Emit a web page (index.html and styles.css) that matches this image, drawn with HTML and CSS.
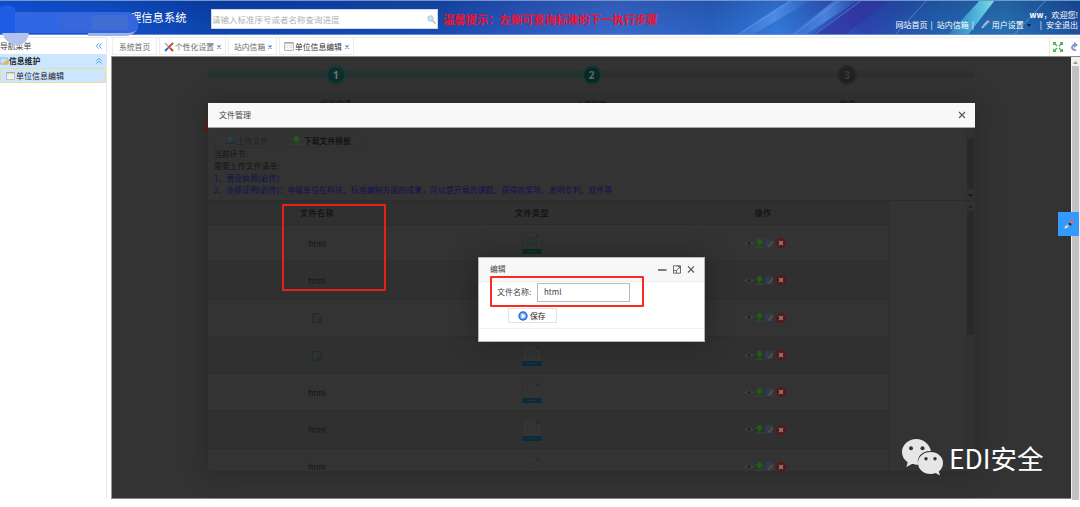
FILE: index.html
```html
<!DOCTYPE html>
<html lang="zh-CN">
<head>
<meta charset="utf-8">
<title>信息系统</title>
<link rel="stylesheet" href="styles.css">
</head>
<body>
<svg class="defs" width="0" height="0">
  <symbol id="eye" viewBox="0 0 16 16"><path d="M0 8Q8 1 16 8Q8 15 0 8Z" fill="#454444" stroke="#4b4039"/><circle cx="8" cy="8" r="4" fill="#25364c"/><circle cx="8" cy="8" r="1.800" fill="#121c28"/></symbol>
  <symbol id="down" viewBox="0 0 16 16"><path d="M5 0h6v4H15L8 12 1 4h4Z" fill="#1d6011"/><path d="M1 14.500h14" fill="none" stroke="#294d29" stroke-width="2.400"/></symbol>
  <symbol id="up" viewBox="0 0 16 16"><path d="M5 10h6V6H14L8 0 2 6h3Z" fill="#1d455d"/><path d="M1 11v3h14v-3" fill="none" stroke="#22292e" stroke-width="2.400"/></symbol>
  <symbol id="edit" viewBox="0 0 16 16"><rect x="1" y="1" width="13" height="13" fill="#2d3d50" stroke="#28415b"/><path d="M5 15l1-4 7-7 2 2-7 7Z" fill="#635028"/></symbol>
  <symbol id="del" viewBox="0 0 16 16"><circle cx="8" cy="8" r="7.800" fill="#5e1414"/><path d="M5 5l6 6M11 5l-6 6" stroke="#858080" stroke-width="2.400"/></symbol>
  <symbol id="broken" viewBox="0 0 16 16"><path d="M1 1h10l4 4v3l-4 2-5 5H1Z" fill="#303336" stroke="#242424"/><path d="M2 13l4-5 4 3-3 3H2Z" fill="#1c3f1b"/><path d="M15 10v5H9Z" fill="#2d2f2d" stroke="#232323"/></symbol>
  <symbol id="html" viewBox="0 0 20 22"><path d="M1 17V2q0-1 1-1h12l5 5v11" fill="#343434" stroke="#303030" stroke-width=".6"/><path d="M14 1v4h5" fill="#2c2c2c"/><path d="M7 7L4.500 9.500 7 12M13 7l2.500 2.500L13 12M11 6.500l-2 6" fill="none" stroke="#1f2f38" stroke-width=".8"/><rect x=".5" y="17" width="19" height="5" rx=".5" fill="#0b2b3b"/><path d="M5 19.500h10" stroke="#173747" stroke-width="1.200" stroke-dasharray="2 .5"/></symbol>
  <symbol id="jpg" viewBox="0 0 20 22"><path d="M1 17V2q0-1 1-1h12l5 5v11" fill="#343434" stroke="#303030" stroke-width=".6"/><path d="M14 1v4h5" fill="#2c2c2c"/><path d="M5 6h10v7H5ZM5.500 12l3-2 2 1 2-2 2.500 2" fill="none" stroke="#1a322a" stroke-width=".8"/><circle cx="7.500" cy="8" r=".8" fill="#1a322a"/><rect x=".5" y="17" width="19" height="5" rx=".5" fill="#0d2c22"/><path d="M6.500 19.500h7" stroke="#1a3a2f" stroke-width="1.200" stroke-dasharray="2 .5"/></symbol>
  <symbol id="form" viewBox="0 0 10 9"><rect x=".5" y=".5" width="9" height="8" rx=".5" fill="#f7f7f2" stroke="#b9bbb2"/><path d="M.5 1h9" stroke="#8c9b91"/><path d="M1.500 3.500h2M1.500 5.500h2M5 3.500h3.500M5 5.500h3.500" stroke="#d5d7d5" stroke-width=".7"/></symbol>
  <symbol id="pen" viewBox="0 0 16 16"><path d="M1 15l1-4 9-9 4 3-9 9Z" fill="#7cc5ef"/><path d="M10 1q3-1 5 1v4l-2 1-4-4Z" fill="#e56060"/><path d="M1 15l1-5 4 4Z" fill="#ffe3a0"/><path d="M6 8l3-3 4 3-3 3Z" fill="#17365e"/></symbol>
  <symbol id="crayon" viewBox="0 0 16 16"><path d="M1 15l2-6 8-8 4 3-8 8Z" fill="#4aa7ec"/><path d="M11 0q4 0 5 3l-2 3-4-4Z" fill="#ef7365"/><path d="M1 15l1-5 4 3Z" fill="#f2bd73"/><path d="M5 9l7-7" stroke="#d6effc" stroke-width="1.500"/></symbol>
</svg>

<header class="header">
  <svg class="header-art" viewBox="0 0 1080 35" preserveAspectRatio="none">
    <defs>
      <linearGradient id="bg"><stop offset="0" stop-color="#1155de"/><stop offset=".1" stop-color="#104fca"/><stop offset=".2" stop-color="#0b3fa5"/><stop offset=".41" stop-color="#1848a8"/><stop offset=".48" stop-color="#2d55b8"/><stop offset=".57" stop-color="#3d68c6"/><stop offset=".66" stop-color="#2d60bd"/><stop offset=".72" stop-color="#367dd8"/><stop offset=".8" stop-color="#303fa8"/><stop offset=".86" stop-color="#245ca6"/><stop offset=".93" stop-color="#2a72ac"/><stop offset="1" stop-color="#1c4b94"/></linearGradient>
      <linearGradient id="ray"><stop offset="0" stop-color="#4b8de6" stop-opacity=".1"/><stop offset=".5" stop-color="#5a95ec" stop-opacity=".7"/><stop offset="1" stop-color="#4b8de6" stop-opacity=".05"/></linearGradient>
      <linearGradient id="shade" x2="0" y2="1"><stop offset="0" stop-color="#001f66" stop-opacity=".2"/><stop offset="1" stop-color="#1c68e0" stop-opacity=".14"/></linearGradient>
      <linearGradient id="cyan"><stop offset="0" stop-color="#3b9bd2" stop-opacity=".5"/><stop offset=".65" stop-color="#55b9dc"/><stop offset="1" stop-color="#79e0e0"/></linearGradient>
    </defs>
    <rect width="1080" height="35" fill="url(#bg)"/>
    <rect width="1080" height="35" fill="url(#shade)"/>
    <path d="M735 35L790 0h22L752 35Z" fill="url(#ray)"/>
    <path d="M790 35L835 0h24L805 35Z" fill="url(#ray)"/>
    <path d="M812 35L860 0h29L845 35Z" fill="#3333a0" opacity=".65"/>
    <path d="M738 35L792 0M793 35L840 0M814 35L862 0M895 35L927 0" stroke="#6aa2ef" stroke-width="1" opacity=".6"/>
    <path d="M948 35L980 0h15L968 35Z" fill="url(#cyan)"/>
    <path d="M1014 35L1046 0" stroke="#4a93cf" stroke-width="1"/>
    <path d="M0 .5h1080" stroke="#7197ce"/>
    <path d="M0 34.500h1080" stroke="#6f99dc" stroke-width=".8"/>
  </svg>
  <h1 class="brand">理信息系统</h1>
  <div class="search"><span>请输入标准序号或者名称查询进度</span>
    <svg width="9" height="9" viewBox="0 0 9 9"><path d="M5.500 5.500L8.500 8.500" stroke="#dcae76" stroke-width="1.500"/><circle cx="3.600" cy="3.500" r="2.700" fill="#c9e6f8" stroke="#9fc4df"/></svg>
  </div>
  <strong class="prompt">温馨提示：左侧可查询标准的下一执行步骤</strong>
  <div class="account">
    <p><b>ww</b>，欢迎您!</p>
    <p><span>网站首页</span><i>|</i><span>站内信箱</span><i>|</i><svg class="pen" width="9" height="9"><use href="#crayon"/></svg><span>用户设置</span><em></em><i>|</i><span>安全退出</span></p>
  </div>
</header>

<div class="workspace">
  <aside class="sidebar">
    <div class="side-title"><span>导航菜单</span><svg width="6" height="6" viewBox="0 0 6 6"><path d="M2.700 .3L.5 3l2.200 2.700M5.500 .3L3.300 3l2.200 2.700"/></svg></div>
    <div class="side-group"><svg class="folder" width="9" height="8" viewBox="0 0 9 8"><path d="M0 1h7l1 1v5H0Z" fill="#c9dff3" stroke="#7ba4c6" stroke-width=".7"/><path d="M2 7l5-4 2 1-4 4Z" fill="#f2b43b"/></svg><b>信息维护</b><svg class="fold" width="6" height="6" viewBox="0 0 6 6"><path d="M.3 2.700L3 .5l2.700 2.200M.3 5.500L3 3.300l2.700 2.200"/></svg></div>
    <div class="side-item"><svg width="9" height="8"><use href="#form"/></svg><span>单位信息编辑</span></div>
  </aside>

  <main class="content">
    <nav class="tabs">
      <div class="tab home">系统首页</div>
      <div class="tab custom"><svg width="10" height="10" viewBox="0 0 10 10"><path d="M1 1l8 8" stroke="#9eabb8" stroke-width="1.500"/><path d="M9 1L4 6" stroke="#c44a39" stroke-width="1.800"/><path d="M4 6L1 9" stroke="#376cc3" stroke-width="2"/><path d="M6 6l3 3" stroke="#cc4935" stroke-width="2"/></svg>个性化设置<svg class="x" width="4" height="4" viewBox="0 0 4 4"><path d="M.4 .4l3.200 3.200M3.600 .4L.4 3.600"/></svg></div>
      <div class="tab mail">站内信箱<svg class="x" width="4" height="4" viewBox="0 0 4 4"><path d="M.4 .4l3.200 3.200M3.600 .4L.4 3.600"/></svg></div>
      <div class="tab current"><svg width="10" height="9"><use href="#form"/></svg>单位信息编辑<svg class="x" width="4" height="4" viewBox="0 0 4 4"><path d="M.4 .4l3.200 3.200M3.600 .4L.4 3.600"/></svg></div>
      <div class="tools">
        <svg width="10" height="10" viewBox="0 0 10 10"><path d="M.5 3V.5H3M7 .5h2.500V3M9.500 7v2.500H7M3 9.500H.5V7M1 1l3 3M9 1L6 4M9 9L6 6M1 9l3-3" fill="none" stroke="#58ad58" stroke-width="1.400"/></svg>
        <svg width="9" height="10" viewBox="0 0 9 10"><path d="M5 3H4a2.500 2.500 0 1 0 2 4.500" fill="none" stroke="#8097c8" stroke-width="2"/><path d="M4 0l4 3-4 3Z" fill="#8097c8"/></svg>
      </div>
    </nav>
    <div class="page">
      <div class="stage">
        <div class="steps">
          <div class="step one"><b>1</b><span>填写申请</span></div>
          <div class="step two"><b>2</b><span>上传附件</span></div>
          <div class="step three"><b>3</b><span>完成</span></div>
        </div>
      </div>
      <div class="scroll"><svg width="5" height="3" viewBox="0 0 5 3"><path d="M0 3h5L2.500 0Z" fill="#999"/></svg><i></i></div>
    </div>
  </main>
</div>

<b class="behind">温</b>
<section class="manager">
  <div class="manager-title"><span>文件管理</span><svg width="8" height="8" viewBox="0 0 8 8"><path d="M1 1l6 6M7 1L1 7" stroke="#555a60" stroke-width="1.200"/></svg></div>
  <div class="info">
    <div class="info-text">
      <div class="buttons"><span class="btn upload"><svg width="8" height="9"><use href="#up"/></svg>上传文件</span><span class="btn download"><svg width="9" height="9"><use href="#down"/></svg>下载文件模板</span></div>
      <p>当前环节:</p>
      <p>需要上传文件清单:</p>
      <p class="blue">1、营业执照(必传)</p>
      <p class="blue long">2、业绩证明(必传)：申报单位在科技、标准编制方面的成果，可以是开展的课题、获得的奖项、发明专利、软件等</p>
    </div>
    <div class="inner-scroll"><i></i><svg width="5" height="3" viewBox="0 0 5 3"><path d="M0 0h5L2.500 3Z" fill="#171717"/></svg></div>
  </div>
  <div class="list">
    <div class="table">
      <div class="row head"><span>文件名称</span><span>文件类型</span><span>操作</span></div>
      <div class="row"><span>html</span><svg class="type"><use href="#jpg"/></svg><div class="ops"><svg><use href="#eye"/></svg><svg><use href="#down"/></svg><svg><use href="#edit"/></svg><svg><use href="#del"/></svg></div></div>
      <div class="row alt"><span>html</span><svg class="type"><use href="#jpg"/></svg><div class="ops"><svg><use href="#eye"/></svg><svg><use href="#down"/></svg><svg><use href="#edit"/></svg><svg><use href="#del"/></svg></div></div>
      <div class="row"><span><svg class="missing"><use href="#broken"/></svg></span><svg class="type"><use href="#html"/></svg><div class="ops"><svg><use href="#eye"/></svg><svg><use href="#down"/></svg><svg><use href="#edit"/></svg><svg><use href="#del"/></svg></div></div>
      <div class="row alt"><span><svg class="missing"><use href="#broken"/></svg></span><svg class="type"><use href="#html"/></svg><div class="ops"><svg><use href="#eye"/></svg><svg><use href="#down"/></svg><svg><use href="#edit"/></svg><svg><use href="#del"/></svg></div></div>
      <div class="row"><span>html</span><svg class="type"><use href="#html"/></svg><div class="ops"><svg><use href="#eye"/></svg><svg><use href="#down"/></svg><svg><use href="#edit"/></svg><svg><use href="#del"/></svg></div></div>
      <div class="row alt"><span>html</span><svg class="type"><use href="#html"/></svg><div class="ops"><svg><use href="#eye"/></svg><svg><use href="#down"/></svg><svg><use href="#edit"/></svg><svg><use href="#del"/></svg></div></div>
      <div class="row"><span>html</span><svg class="type"><use href="#html"/></svg><div class="ops"><svg><use href="#eye"/></svg><svg><use href="#down"/></svg><svg><use href="#edit"/></svg><svg><use href="#del"/></svg></div></div>
    </div>
    <div class="list-scroll"><svg width="5" height="3" viewBox="0 0 5 3"><path d="M0 3h5L2.500 0Z" fill="#222"/></svg><i></i></div>
  </div>
</section>

<div class="mark mark-names"></div>

<section class="dialog">
  <div class="dialog-title"><span>编辑</span>
    <svg width="38" height="9" viewBox="0 0 38 9" fill="none" stroke="#5a5f66"><path d="M0 5h8.500" stroke-width="1.600"/><path d="M15.500 .8h7v7.400h-7ZM18.700 5.200l3.400-3.500M19.500 1.400h2.600v2.600M16 5.500h2.500V8" stroke-width=".9"/><path d="M30 1.300l6 6.200M36 1.300l-6 6.200" stroke-width="1.200"/></svg>
  </div>
  <div class="field"><label>文件名称:</label><div class="input">html</div></div>
  <div class="save"><svg width="10" height="10" viewBox="0 0 10 10"><circle cx="5" cy="5" r="4.700" fill="#2e6cdc"/><circle cx="5" cy="5" r="3.200" fill="#72b4f5"/><path d="M3.700 2.300L7.500 5 3.700 7.700Z" fill="#fff"/></svg>保存</div>
</section>
<div class="mark mark-field"></div>

<div class="float-pen"><svg width="10" height="10"><use href="#pen"/></svg></div>

<div class="watermark">
  <svg width="42" height="37" viewBox="0 0 42 37"><path d="M14.500 0C6.500 0 0 5.800 0 13c0 4.300 2.200 8 5.700 10.300L4.300 28l5.600-3c2 .6 4 .8 6.400 .8C14 17 21 11.500 29 12 27.500 5 21.500 0 14.500 0Z" fill="#e6e6e6"/><path d="M28.500 13C21.500 13 16 17.700 16 24s5.500 11 12.500 11c1.800 0 3.700-.3 5.200-.9l4.300 2.300-1.200-3.800C39.500 30.500 41 27.500 41 24c0-6.300-5.500-11-12.500-11Z" fill="#e6e6e6"/><g fill="#333"><circle cx="9" cy="9.300" r="2"/><circle cx="20.500" cy="9.300" r="2"/><circle cx="24" cy="19.700" r="1.700"/><circle cx="33" cy="19.700" r="1.700"/></g></svg>
  <span>EDI安全</span>
</div>

<svg class="redaction" width="142" height="47" viewBox="0 0 142 47">
  <path d="M1 29H29C29 38 26 45 17 45 8 45 3 38 1 29Z" fill="#b2c4ee"/>
  <path d="M28 30H137Q132 36 125 36H88V33H28Z" fill="#9eb4e8"/>
  <path d="M0 7Q7 3 15 8V33H0Z" fill="#1e5ce6"/>
  <path d="M15 12H129Q140 16 138 29Q134 33 128 33H15Z" fill="#3366dc"/>
  <path d="M15 15H60V30H15Z" fill="#2f67e5"/><path d="M60 15H92V30H60Z" fill="#3767db"/><path d="M92 15H128V30H92Z" fill="#406dd3"/>
</svg>
</body>
</html>
```

FILE: styles.css
```css
* { box-sizing: border-box; }
body {
  margin: 0;
  width: 1080px;
  height: 507px;
  position: relative;
  overflow: hidden;
  background: #fff;
  color: #555;
  font: 7.8px/12px "Noto Sans CJK SC", "Noto Sans", sans-serif;
}
p, h1 { margin: 0; }
svg { display: block; flex: none; }
.defs { position: absolute; }

.header { position: relative; display: flex; height: 35px; color: #fff; }
.header > * { position: relative; flex: none; white-space: nowrap; }
.header .header-art { position: absolute; inset: 0; width: 100%; height: 100%; }
.brand { margin-left: 130px; width: 81px; font-size: 11.3px; line-height: 35px; font-weight: 400; }
.search {
  display: flex;
  align-items: center;
  justify-content: space-between;
  width: 227px;
  height: 20px;
  margin-top: 9px;
  padding: 0 1px 0 0;
  background: #fff;
  border: 1px solid #ccd8ee;
  color: #b2b2b2;
  font-size: 8.5px;
}
.prompt { margin-left: 5px; color: #f4102b; font-size: 11.3px; line-height: 39px; }
.account { position: absolute !important; right: 2px; top: 10px; line-height: 10px; font-size: 8px; }
.account p { display: flex; justify-content: flex-end; }
.account i { font-style: normal; margin: 0 4px 0 3px; }
.account em { border: 2.5px solid transparent; border-top: 3px solid #071c34; height: 0; margin: 4px 6px 0 3px; }
.pen { margin: 0 2px 0 3px; }

.workspace { display: flex; height: 464px; padding-top: 2px; }
.sidebar { width: 107px; height: 462px; border: 1px solid #e8e8e8; border-width: 1px 1px 0 0; margin-right: 4px; color: #444; }
.side-title { display: flex; justify-content: space-between; align-items: center; height: 16px; padding-right: 4px; }
.sidebar path { fill: none; stroke: #5ba9e7; }
.sidebar .folder path:first-child { fill: #c9dff3; }
.sidebar .folder path:last-child { fill: #f2b43b; stroke: none; }
.side-group { display: flex; align-items: center; height: 14px; background: #cce6ff; color: #222; }
.side-group .fold { margin-left: auto; margin-right: 4px; }
.side-item { display: flex; align-items: center; height: 15px; padding-left: 5px; background: #cde6ff; border: 1px solid #eadf96; color: #222; gap: 1px; font-size: 8px; }

.content { width: 969px; }
.tabs { display: flex; height: 19px; border-top: 1px solid #ececec; background: #fff; }
.tab { display: flex; align-items: center; height: 17px; border: 1px solid #ededed; border-top: 0; margin-right: 2px; color: #6c6c6c; white-space: nowrap; padding-top: 1px; }
.tab svg { margin-right: 1px; }
.tab .x { margin: 1px 0 0 3px; fill: none; stroke: #4f83c8; stroke-width: 1.1; }
.home { margin-left: 1px; width: 45px; padding-left: 6px; }
.custom { width: 67px; padding-left: 4px; }
.mail { width: 49px; padding-left: 5px; }
.current { width: 75px; padding-left: 4px; color: #333; }
.tools { display: flex; gap: 7px; align-items: center; margin-left: auto; width: 31px; padding-left: 3px; border-left: 1px solid #e7e7e7; }
.page { display: flex; height: 443px; border-top: 1px solid #8c8c8c; }
.stage { width: 960px; background: #333; border-bottom: 1px solid #888; border-left: 1px solid #999; }
.steps { display: flex; margin: 8px 0 0 96px; width: 767px; height: 44px; background: linear-gradient(90deg, #253331 50%, #2f2f2f 50%) 0 6px / 767px 7px no-repeat; }
.step { flex: 1; text-align: center; color: #141414; }
.step b { display: block; width: 20px; height: 20px; margin: 0 auto 14px; border: 2px solid #1b3835; border-radius: 50%; background: #0c2e2c; color: #737878; font: bold 10px/16px "Noto Sans", sans-serif; }
.step span { display: block; line-height: 10px; }
.two b { color: #596866; background: #0b2827; }
.three b { color: #3c3c3c; background: #222; border-color: #292929; }
.behind { position: absolute; left: 202px; top: 120px; color: #6e1717; font-size: 11px; }
.scroll { width: 9px; background: #f0f0f0; padding: 4px 1px 0; }
.scroll svg { margin-left: 1px; }
.scroll i { display: block; height: 434px; margin-top: 2px; background: #c1c1c1; }

.manager { position: absolute; left: 208px; top: 103px; width: 767px; height: 368px; background: #333; box-shadow: 0 0 25px 2px rgba(0, 0, 0, .22); color: #151515; }
.manager-title { display: flex; align-items: center; justify-content: space-between; height: 25px; padding: 0 9px 0 11px; background: #f8f8f8; border-bottom: 1px solid #a7a7a7; color: #444; font-size: 8px; }
.info { display: flex; justify-content: space-between; height: 73px; border-bottom: 1px solid #2c2c2c; }
.info-text { padding: 5px 0 0 6px; white-space: nowrap; }
.buttons { display: flex; gap: 3px; height: 15px; }
.btn { display: flex; align-items: center; gap: 3px; height: 15px; border: 1px solid #303030; padding-left: 11px; }
.upload { width: 65px; color: #202020; }
.download { width: 80px; color: #0e0e0e; padding-left: 9px; font-weight: 500; gap: 3px; }
.info-text p { height: 12px; line-height: 12px; letter-spacing: .13px; }
.info-text .blue { color: #11114f; }
.inner-scroll { width: 9px; background: #313131; display: flex; flex-direction: column; align-items: center; padding-top: 10px; gap: 5px; }
.inner-scroll i { width: 7px; height: 51px; background: #292929; }
.list { display: flex; justify-content: space-between; height: 270px; overflow: hidden; }
.table { width: 681px; border-right: 1px solid #2e2e2e; }
.row { display: grid; grid-template-columns: 218px 212px 250px; align-items: center; justify-items: center; height: 37.3px; border-bottom: 1px solid #2d2d2d; }
.row > span { font-size: 8px; padding-top: 1px; }
.row.alt { background: #303030; }
.row.head { height: 24px; background: #303030; font-weight: 700; letter-spacing: .5px; }
.type { width: 20px; height: 22px; }
.missing { width: 10px; height: 10px; }
.ops { display: flex; width: 42px; margin-left: 3px; align-items: center; }
.ops svg { width: 9px; height: 9px; margin-right: 1px; }
.ops svg:first-child { width: 10px; }
.ops svg:nth-child(3) { margin-right: 2px; }
.ops svg:last-child { width: 10px; height: 10px; margin: 0; }
.list-scroll { width: 9px; background: #313131; display: flex; flex-direction: column; align-items: center; padding-top: 4px; gap: 3px; }
.list-scroll i { width: 7px; height: 124px; background: #292929; }

.mark { position: absolute; border: 2px solid #e42219; border-radius: 1px; }
.mark-names { left: 282px; top: 204px; width: 104px; height: 87px; }
.mark-field { left: 490px; top: 276px; width: 154px; height: 31px; border-color: #fa2b22; }

.dialog { position: absolute; left: 478px; top: 257px; width: 227px; height: 85px; background: #fff; border: 1px solid #b5b5b5; box-shadow: 0 0 25px 2px rgba(0, 0, 0, .25); color: #444; }
.dialog-title { display: flex; align-items: center; justify-content: space-between; height: 24px; padding: 0 8px 1px 11px; background: #f7f7f7; border-bottom: 1px solid #eee; }
.field { display: flex; align-items: center; height: 20px; padding-left: 18px; gap: 6px; white-space: nowrap; font-size: 8px; }
.field label { width: 34px; }
.input { width: 93px; height: 19px; border: 1px solid #b9b9b9; padding-left: 6px; line-height: 16px; }
.save { display: flex; align-items: center; width: 49px; height: 15px; margin: 6px 0 0 29px; padding-left: 9px; gap: 2px; border: 1px solid #e3e3e3; color: #222; }
.dialog::after { content: ""; display: block; margin-top: 5px; border-top: 1px solid #f2f2f2; }

.float-pen { position: absolute; left: 1058px; top: 212px; width: 21px; height: 24px; display: grid; place-items: center; background: #3399ff; }
.watermark { position: absolute; left: 902px; top: 439px; display: flex; gap: 5px; color: #fff; font-size: 26.5px; line-height: 38px; white-space: nowrap; }
.redaction { position: absolute; left: 0; top: 0; }
```
